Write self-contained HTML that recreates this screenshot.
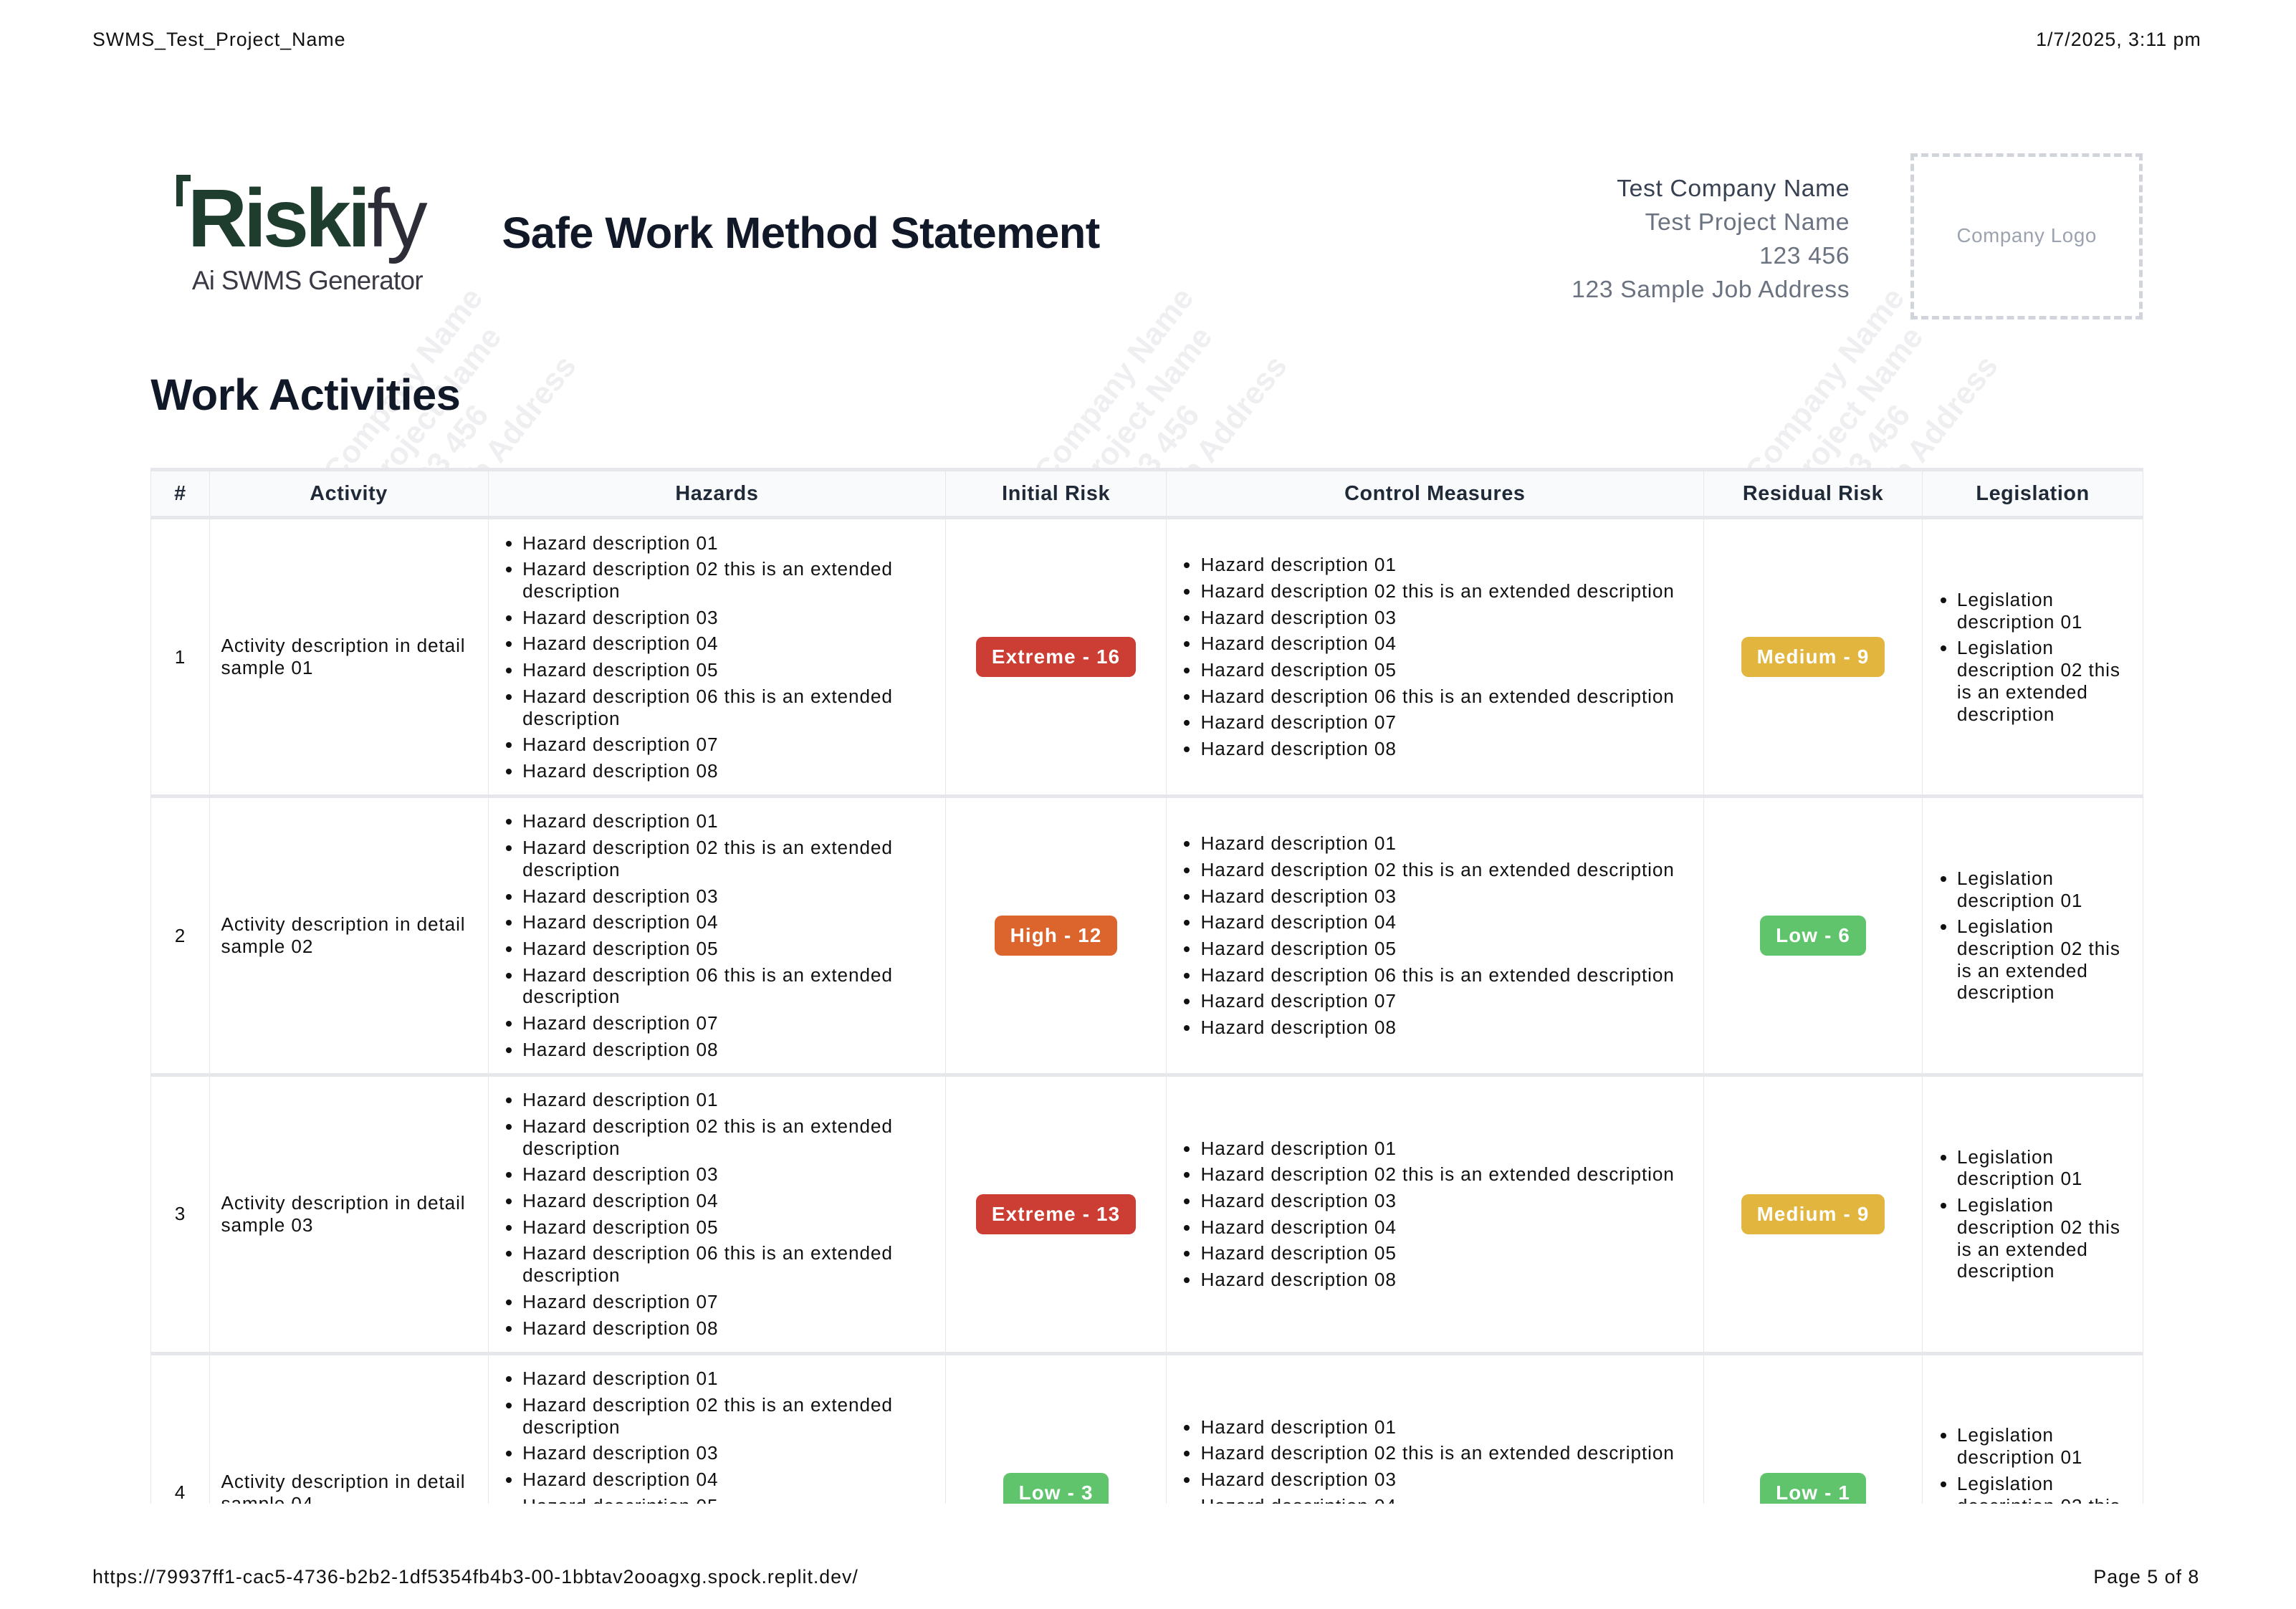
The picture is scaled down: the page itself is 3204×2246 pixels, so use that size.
<!DOCTYPE html>
<html><head><meta charset="utf-8"><style>
html{zoom:1.984}
*{box-sizing:border-box;margin:0;padding:0}
body{width:1620px;height:1132px;position:relative;overflow:hidden;background:#fff;font-family:"Liberation Sans",Arial,sans-serif;color:#111}
.abs{position:absolute}
.wm{position:absolute;transform:rotate(-52deg);transform-origin:left top;color:#efeff2;font-weight:bold;font-size:22px;line-height:27px;white-space:nowrap}
table{border-collapse:collapse;table-layout:fixed;width:1401px;position:absolute;left:106px;top:329px}
th,td{border:1px solid #e5e7eb;font-size:13.2px;line-height:15.5px;vertical-align:middle;letter-spacing:0.45px}
th{height:34px;background:#f9fafb;font-weight:bold;font-size:14.5px;color:#1f2937;text-align:center;border-bottom:3px solid #e5e7eb;border-top:3px solid #e5e7eb;letter-spacing:0.3px}
td{height:196px;padding:0 8px;border-bottom:3px solid #e5e7eb}
ul{padding-left:16px}
li{margin:3px 0}
.c{text-align:center}
.b{display:inline-block;color:#fff;font-weight:bold;font-size:14px;line-height:28px;padding:0 11px;border-radius:5px;letter-spacing:0.6px}
.ex{background:#cc3d33}.hi{background:#dc652e}.me{background:#e2b53f}.lo{background:#5fc46b}
.hd{font-size:13.5px;letter-spacing:0.5px}
</style></head><body>
<div class="abs hd" style="left:65px;top:20px">SWMS_Test_Project_Name</div>
<div class="abs hd" style="left:1432px;top:20px;width:115px;text-align:right;white-space:nowrap">1/7/2025, 3:11 pm</div>

<div class="wm" style="left:222px;top:328px">Company Name<br>&nbsp;&nbsp;Project Name<br>&nbsp;&nbsp;&nbsp;&nbsp;123 456<br>&nbsp;&nbsp;&nbsp;&nbsp;&nbsp;&nbsp;Job Address</div>
<div class="wm" style="left:722px;top:328px">Company Name<br>&nbsp;&nbsp;Project Name<br>&nbsp;&nbsp;&nbsp;&nbsp;123 456<br>&nbsp;&nbsp;&nbsp;&nbsp;&nbsp;&nbsp;Job Address</div>
<div class="wm" style="left:1222px;top:328px">Company Name<br>&nbsp;&nbsp;Project Name<br>&nbsp;&nbsp;&nbsp;&nbsp;123 456<br>&nbsp;&nbsp;&nbsp;&nbsp;&nbsp;&nbsp;Job Address</div>

<div class="abs" style="left:124px;top:123px;width:10px;height:22px;border-left:5px solid #1f3d2e;border-top:5px solid #1f3d2e"></div>
<div class="abs" style="left:132px;top:118px;font-size:58px;font-weight:bold;letter-spacing:-2.5px;color:#1f3d2e;line-height:72px">Riski<span style="color:#2d2d38;font-weight:normal">fy</span></div>
<div class="abs" style="left:135px;top:187px;font-size:18.5px;color:#3a3a44;letter-spacing:-0.3px">Ai SWMS Generator</div>
<div class="abs" style="left:353px;top:146px;font-size:31px;font-weight:bold;color:#111827;letter-spacing:-0.3px">Safe Work Method Statement</div>

<div class="abs" style="left:1000px;width:301px;top:121px;text-align:right;font-size:17px;line-height:23.7px;color:#6b7280;letter-spacing:0.3px">
<div style="color:#374151">Test Company Name</div><div>Test Project Name</div><div>123 456</div><div>123 Sample Job Address</div></div>
<div class="abs" style="left:1344px;top:108px;width:163px;height:117px;border:3px dashed #d1d5db;color:#9ca3af;font-size:14px;text-align:center;line-height:111px;letter-spacing:0.3px">Company Logo</div>

<div class="abs" style="left:106px;top:260px;font-size:31px;font-weight:bold;color:#111827;letter-spacing:-0.3px">Work Activities</div>

<div class="abs" style="left:0;top:0;width:1602px;height:1058px;overflow:hidden">
<table>
<colgroup><col style="width:41px"><col style="width:196px"><col style="width:322px"><col style="width:155px"><col style="width:378px"><col style="width:154px"><col style="width:155px"></colgroup>
<tr><th>#</th><th>Activity</th><th>Hazards</th><th>Initial Risk</th><th>Control Measures</th><th>Residual Risk</th><th>Legislation</th></tr>
<tr><td class="c">1</td><td>Activity description in detail sample 01</td>
<td><ul><li>Hazard description 01</li><li>Hazard description 02 this is an extended description</li><li>Hazard description 03</li><li>Hazard description 04</li><li>Hazard description 05</li><li>Hazard description 06 this is an extended description</li><li>Hazard description 07</li><li>Hazard description 08</li></ul></td>
<td class="c"><span class="b ex">Extreme - 16</span></td>
<td><ul><li>Hazard description 01</li><li>Hazard description 02 this is an extended description</li><li>Hazard description 03</li><li>Hazard description 04</li><li>Hazard description 05</li><li>Hazard description 06 this is an extended description</li><li>Hazard description 07</li><li>Hazard description 08</li></ul></td>
<td class="c"><span class="b me">Medium - 9</span></td>
<td><ul><li>Legislation description 01</li><li>Legislation description 02 this is an extended description</li></ul></td></tr>
<tr><td class="c">2</td><td>Activity description in detail sample 02</td>
<td><ul><li>Hazard description 01</li><li>Hazard description 02 this is an extended description</li><li>Hazard description 03</li><li>Hazard description 04</li><li>Hazard description 05</li><li>Hazard description 06 this is an extended description</li><li>Hazard description 07</li><li>Hazard description 08</li></ul></td>
<td class="c"><span class="b hi">High - 12</span></td>
<td><ul><li>Hazard description 01</li><li>Hazard description 02 this is an extended description</li><li>Hazard description 03</li><li>Hazard description 04</li><li>Hazard description 05</li><li>Hazard description 06 this is an extended description</li><li>Hazard description 07</li><li>Hazard description 08</li></ul></td>
<td class="c"><span class="b lo">Low - 6</span></td>
<td><ul><li>Legislation description 01</li><li>Legislation description 02 this is an extended description</li></ul></td></tr>
<tr><td class="c">3</td><td>Activity description in detail sample 03</td>
<td><ul><li>Hazard description 01</li><li>Hazard description 02 this is an extended description</li><li>Hazard description 03</li><li>Hazard description 04</li><li>Hazard description 05</li><li>Hazard description 06 this is an extended description</li><li>Hazard description 07</li><li>Hazard description 08</li></ul></td>
<td class="c"><span class="b ex">Extreme - 13</span></td>
<td><ul><li>Hazard description 01</li><li>Hazard description 02 this is an extended description</li><li>Hazard description 03</li><li>Hazard description 04</li><li>Hazard description 05</li><li>Hazard description 08</li></ul></td>
<td class="c"><span class="b me">Medium - 9</span></td>
<td><ul><li>Legislation description 01</li><li>Legislation description 02 this is an extended description</li></ul></td></tr>
<tr><td class="c">4</td><td>Activity description in detail sample 04</td>
<td><ul><li>Hazard description 01</li><li>Hazard description 02 this is an extended description</li><li>Hazard description 03</li><li>Hazard description 04</li><li>Hazard description 05</li><li>Hazard description 06 this is an extended description</li><li>Hazard description 07</li><li>Hazard description 08</li></ul></td>
<td class="c"><span class="b lo">Low - 3</span></td>
<td><ul><li>Hazard description 01</li><li>Hazard description 02 this is an extended description</li><li>Hazard description 03</li><li>Hazard description 04</li><li>Hazard description 05</li><li>Hazard description 06</li></ul></td>
<td class="c"><span class="b lo">Low - 1</span></td>
<td><ul><li>Legislation description 01</li><li>Legislation description 02 this is an extended description</li></ul></td></tr>
</table>
</div>

<div class="abs hd" style="left:65px;top:1102px">https://79937ff1-cac5-4736-b2b2-1df5354fb4b3-00-1bbtav2ooagxg.spock.replit.dev/</div>
<div class="abs hd" style="left:1400px;width:147px;text-align:right;top:1102px">Page 5 of 8</div>
</body></html>
